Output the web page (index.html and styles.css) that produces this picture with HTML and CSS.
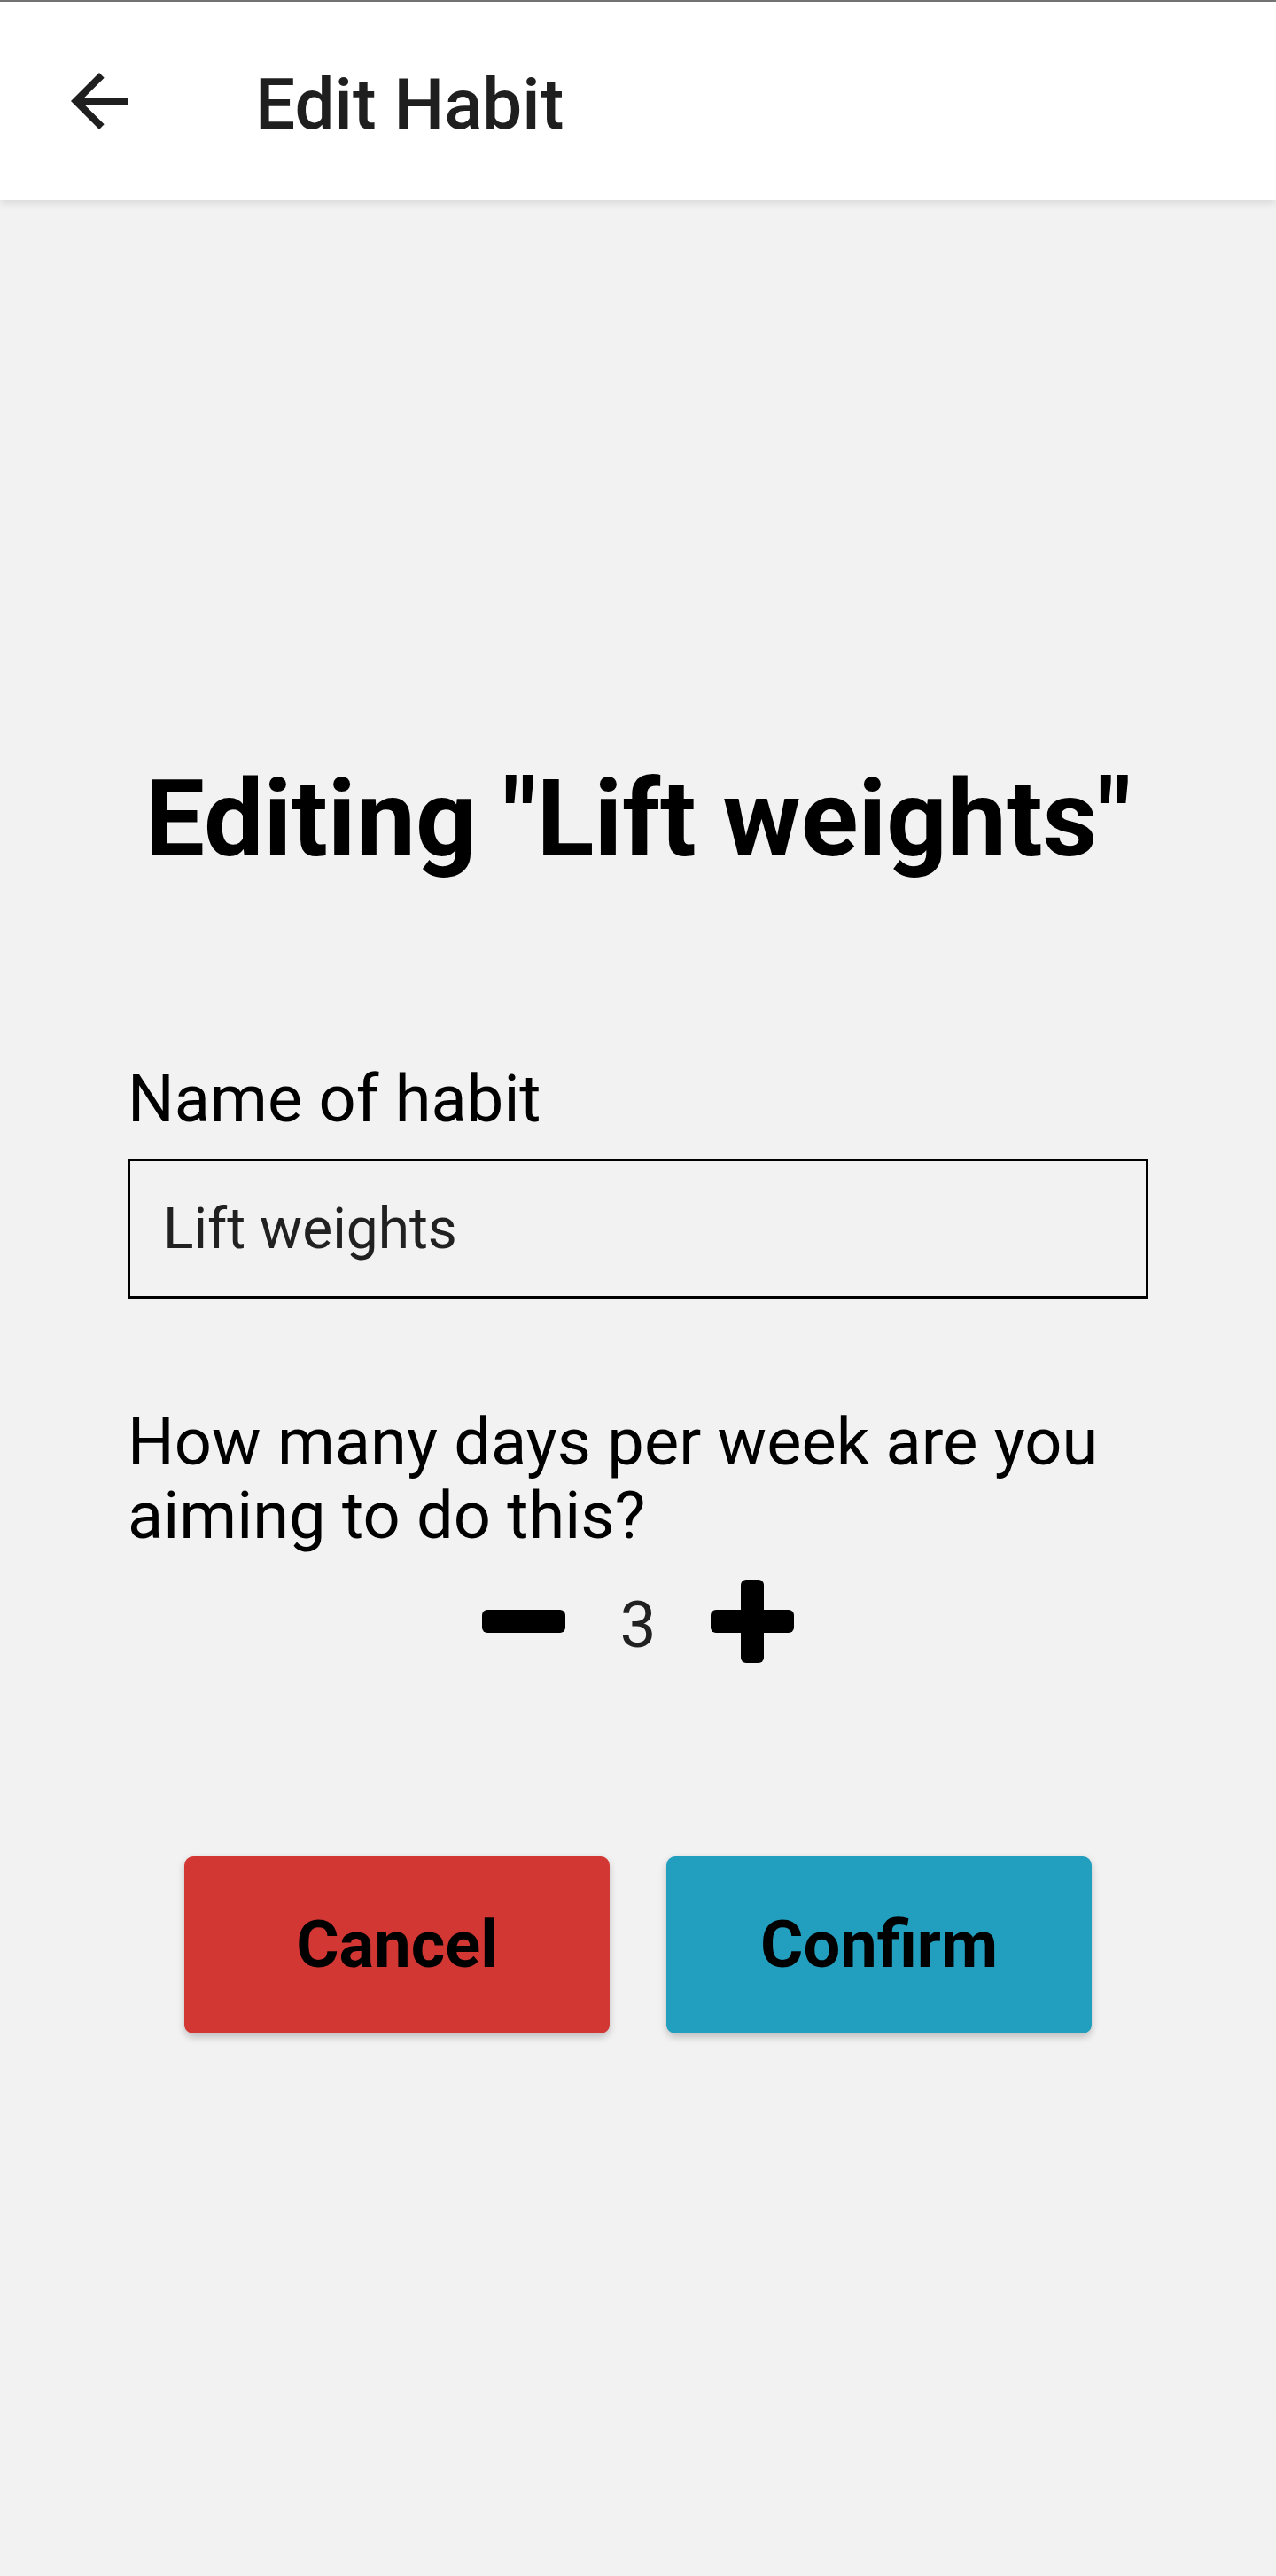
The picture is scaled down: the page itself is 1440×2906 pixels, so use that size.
FILE: index.html
```html
<!DOCTYPE html>
<html lang="en">
<head>
<meta charset="utf-8">
<title>Edit Habit</title>
<link rel="stylesheet" href="styles.css">
</head>
<body>
<div class="topline"></div>
<header class="appbar">
  <button class="back" aria-label="Back">
    <svg viewBox="0 0 24 24" width="96" height="96"><path d="M20 11H7.83l5.59-5.59L12 4l-8 8 8 8 1.41-1.41L7.83 13H20v-2z"/></svg>
  </button>
  <h1 class="appbar-title">Edit Habit</h1>
</header>
<main class="content">
  <h2 class="page-title">Editing "Lift weights"</h2>
  <label class="field-label" for="habit-name">Name of habit</label>
  <input class="text-input" id="habit-name" type="text" value="Lift weights">
  <p class="question">How many days per week are you aiming to do this?</p>
  <div class="stepper">
    <button class="step-btn step-minus" aria-label="Decrease">
      <svg viewBox="0 0 94 26" width="94" height="26"><rect x="0" y="0" width="94" height="26" rx="6"/></svg>
    </button>
    <span class="step-value">3</span>
    <button class="step-btn step-plus" aria-label="Increase">
      <svg viewBox="0 0 94 94" width="94" height="94"><rect x="0" y="34" width="94" height="26" rx="6"/><rect x="34" y="0" width="26" height="94" rx="6"/></svg>
    </button>
  </div>
  <div class="actions">
    <button class="btn btn-cancel">Cancel</button>
    <button class="btn btn-confirm">Confirm</button>
  </div>
</main>
</body>
</html>
```
FILE: styles.css
```css
* { box-sizing: border-box; }
html, body { margin: 0; padding: 0; }
body {
  width: 1440px;
  min-height: 2906px;
  background: #f2f2f2;
  font-family: Roboto, "Liberation Sans", sans-serif;
  color: #000;
}
.topline {
  height: 2px;
  background: #777;
}
.appbar {
  position: relative;
  z-index: 1;
  height: 224px;
  background: #fff;
  display: flex;
  align-items: center;
  box-shadow: 0 2px 10px rgba(0, 0, 0, 0.13);
}
.back {
  margin-left: 64px;
  width: 96px;
  height: 96px;
  padding: 0;
  border: none;
  background: none;
  display: flex;
}
.back svg { fill: #1f1f1f; }
.appbar-title {
  margin: 7px 0 0 128px;
  font-size: 80px;
  line-height: 80px;
  font-weight: 500;
  color: #1f1f1f;
}
.content {
  padding: 628px 144px 0;
  display: flex;
  flex-direction: column;
}
.page-title {
  margin: 0;
  text-align: center;
  font-size: 120px;
  line-height: 140px;
  font-weight: 700;
  color: #000;
}
.field-label {
  margin-top: 204px;
  font-size: 74px;
  line-height: 84px;
  color: #000;
}
.text-input {
  margin-top: 25px;
  width: 1152px;
  height: 158px;
  border: 3px solid #000;
  background: transparent;
  padding: 0 0 0 37px;
  font-family: Roboto, "Liberation Sans", sans-serif;
  font-size: 64px;
  color: #212121;
  outline: none;
}
.question {
  margin: 120px 0 0;
  font-size: 74px;
  line-height: 83px;
  color: #000;
}
.stepper {
  margin-top: 30px;
  height: 96px;
  display: flex;
  justify-content: center;
  align-items: center;
  gap: 61px;
}
.step-btn {
  padding: 0;
  border: none;
  background: none;
  display: flex;
}
.step-btn svg { fill: #000; }
.step-value {
  font-size: 73px;
  line-height: 84px;
  padding-top: 8px;
  color: #212121;
}
.actions {
  margin-top: 217px;
  display: flex;
  justify-content: center;
  gap: 64px;
}
.btn {
  width: 480px;
  height: 200px;
  border: none;
  border-radius: 10px;
  font-family: Roboto, "Liberation Sans", sans-serif;
  font-size: 74px;
  line-height: 84px;
  font-weight: 700;
  color: #000;
  box-shadow: 0 4px 8px rgba(0, 0, 0, 0.22);
}
.btn-cancel { background: #d33734; }
.btn-confirm { background: #229fbe; }
```
